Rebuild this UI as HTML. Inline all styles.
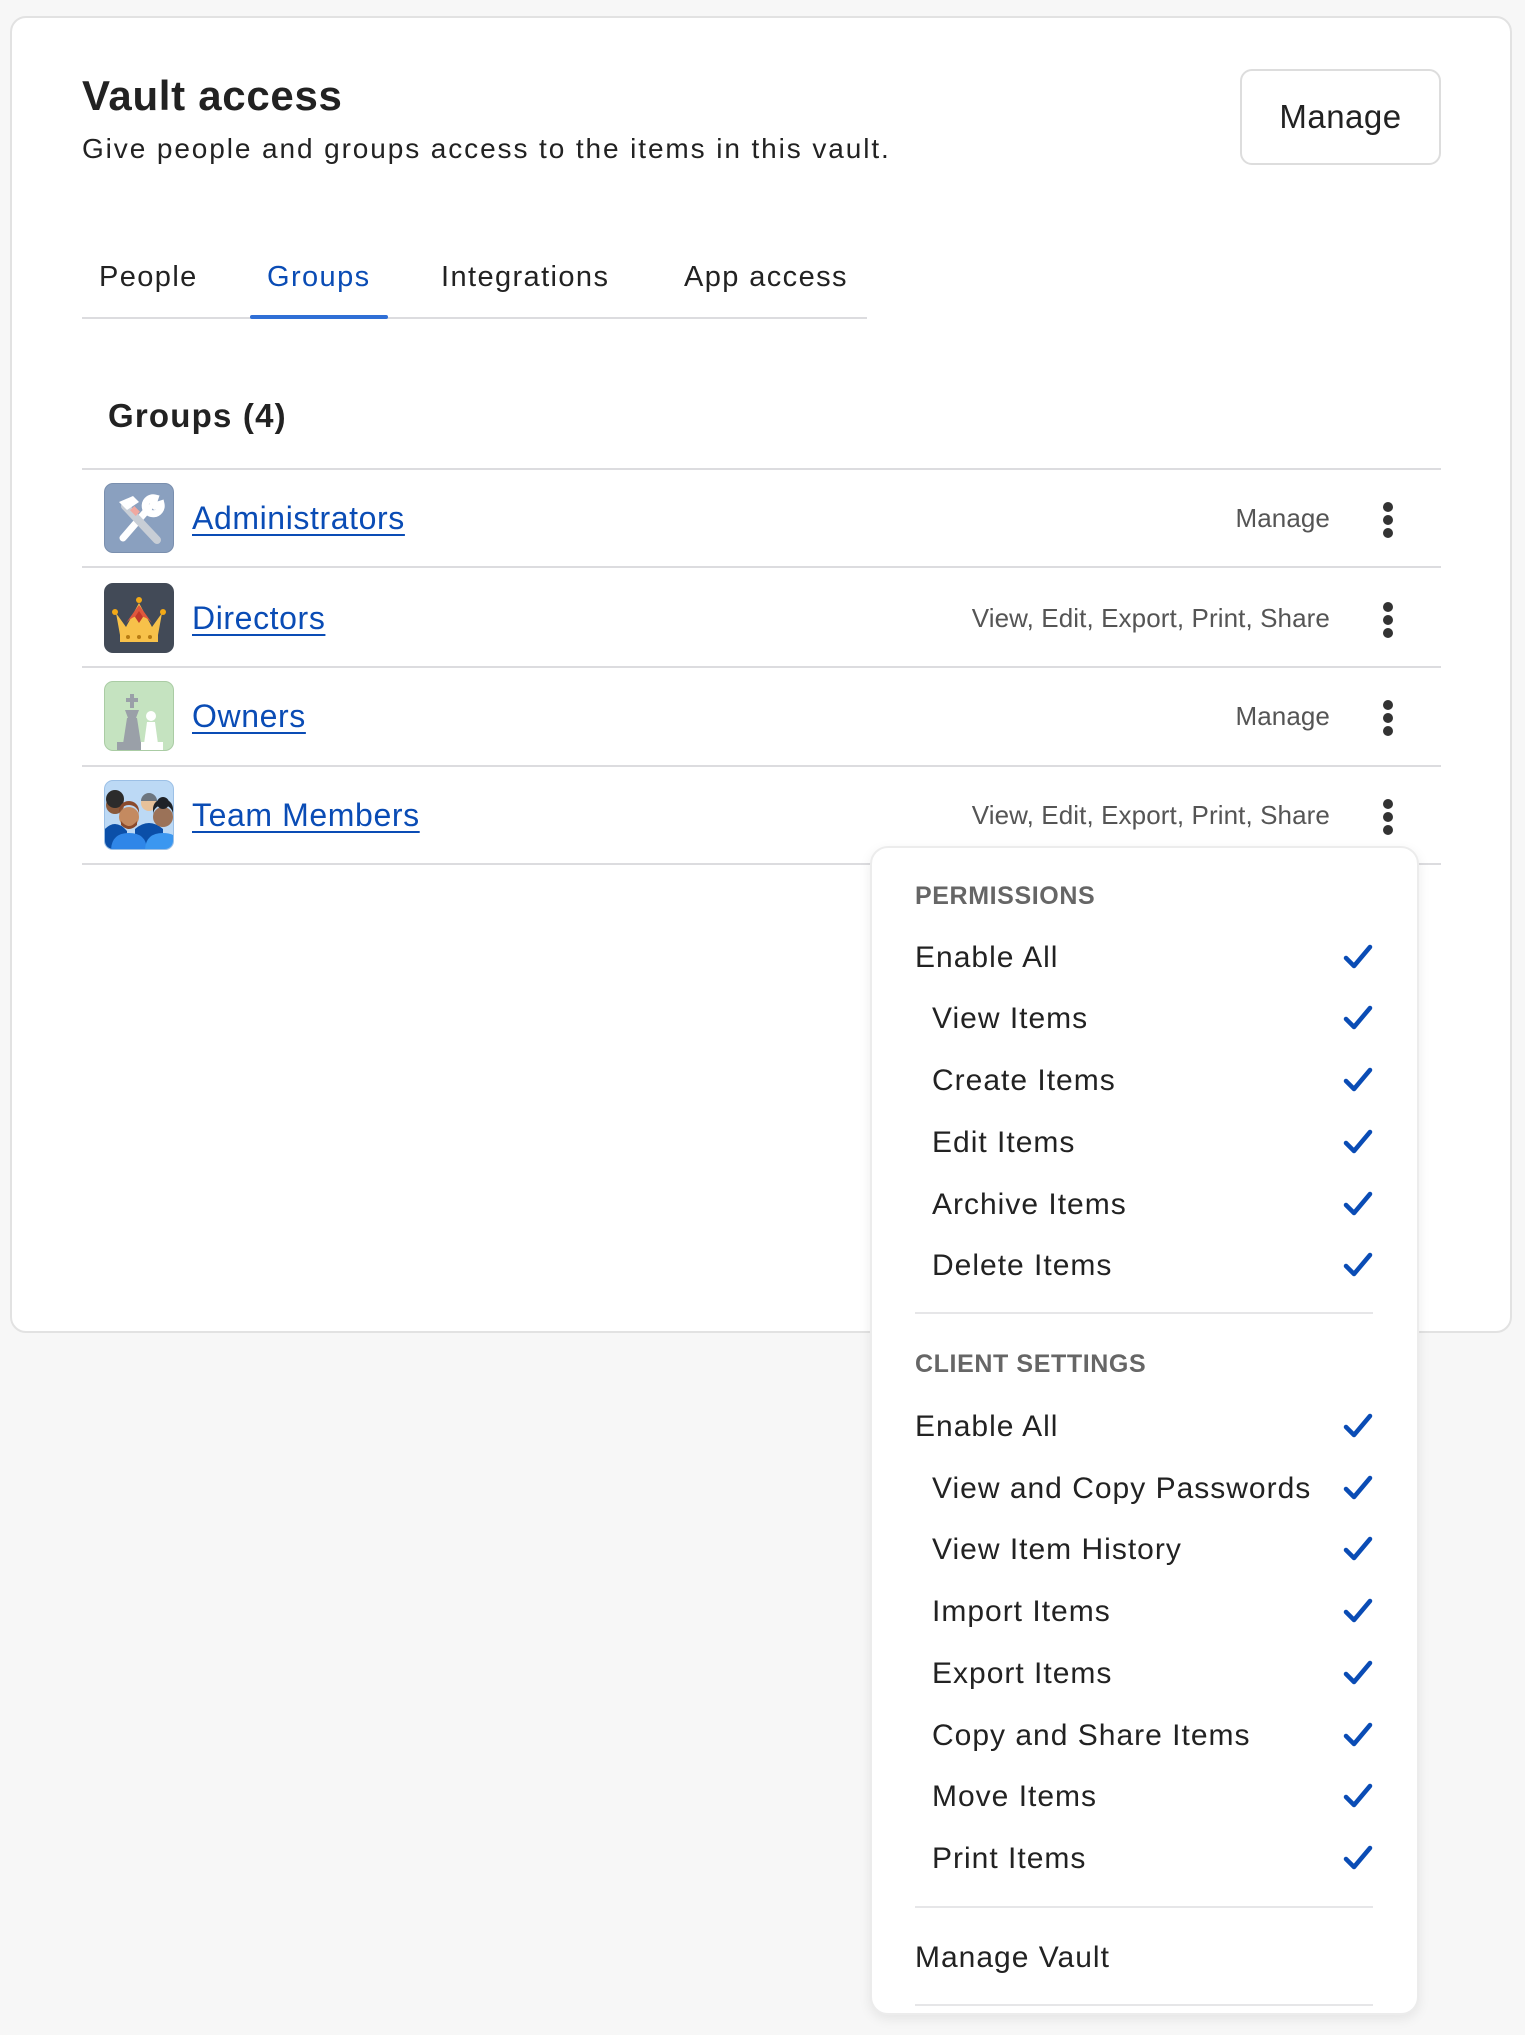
<!DOCTYPE html>
<html><head><meta charset="utf-8"><style>
*{margin:0;padding:0;box-sizing:border-box}
body{width:1525px;height:2035px;background:#f7f7f7;position:relative;overflow:hidden;font-family:"Liberation Sans",sans-serif;color:#222}
.t{position:absolute;line-height:1;white-space:nowrap}
.card{position:absolute;left:10px;top:16px;width:1502px;height:1317px;background:#fff;border:2px solid #e2e2e2;border-radius:16px}
.hl{position:absolute;height:2px;background:#dcdcdf}
.name{color:#0a4cb5;text-decoration:underline;text-decoration-thickness:2px;text-underline-offset:5px;font-size:32px;letter-spacing:.6px}
.perm{color:#555;font-size:26px;letter-spacing:.1px}
.ico{position:absolute;left:104px;width:70px;height:70px;border-radius:9px;overflow:hidden}
.kb{position:absolute;left:1383px;width:10px}
.kb i{display:block;width:10px;height:10px;border-radius:50%;background:#333;margin-bottom:3px}
.dd{position:absolute;left:870px;top:846px;width:549px;height:1169px;background:#fff;border:2px solid #ececec;border-radius:18px;box-shadow:0 4px 12px rgba(0,0,0,.08)}
.hd{font-size:25px;font-weight:bold;color:#666;left:915px;letter-spacing:.6px}
.it{font-size:30px;color:#222;letter-spacing:1px}
.tab{font-size:29px;letter-spacing:1.4px;top:263px}
.ck{position:absolute;left:1343px;width:30px;height:26px}
</style></head><body>
<div class="card"></div>
<div class="t" style="left:82px;top:75px;font-size:42px;font-weight:bold;letter-spacing:.7px">Vault access</div>
<div class="t" style="left:82px;top:135px;font-size:28px;letter-spacing:1.9px">Give people and groups access to the items in this vault.</div>
<div style="position:absolute;left:1240px;top:69px;width:201px;height:96px;border:2px solid #ddd;border-radius:12px;font-size:33px;display:flex;align-items:center;justify-content:center;letter-spacing:.5px">Manage</div>
<div class="t tab" style="left:99px">People</div>
<div class="t tab" style="left:267px;color:#0a4cb5">Groups</div>
<div class="t tab" style="left:441px">Integrations</div>
<div class="t tab" style="left:684px">App access</div>
<div class="hl" style="left:82px;top:317px;width:785px"></div>
<div style="position:absolute;left:250px;top:315px;width:138px;height:4px;background:#2f6fd6;border-radius:2px"></div>
<div class="t" style="left:108px;top:399px;font-size:33px;font-weight:bold;letter-spacing:1.2px">Groups (4)</div>

<div class="hl" style="left:82px;top:468px;width:1359px"></div>
<div class="hl" style="left:82px;top:566px;width:1359px"></div>
<div class="hl" style="left:82px;top:666px;width:1359px"></div>
<div class="hl" style="left:82px;top:765px;width:1359px"></div>
<div class="hl" style="left:82px;top:863px;width:1359px"></div>

<div class="ico" style="top:483px;background:#8aa0bf;border:1px solid #7a8fae"><svg width="70" height="70" viewBox="0 0 70 70"><path d="M18 54 L44 24 M50 14 a8 8 0 1 0 6 6 l-6 2-2-2 2-6z" stroke="#fff" stroke-width="7" fill="none" stroke-linecap="round"/><path d="M20 22 L52 56" stroke="#c8ced6" stroke-width="8" stroke-linecap="round"/><path d="M14 18 l14-6 6 6-12 8z" fill="#fff"/><rect x="26" y="24" width="8" height="6" fill="#f0a8a0" transform="rotate(45 30 27)"/></svg></div>
<div class="t name" style="left:192px;top:502px">Administrators</div>
<div class="t perm" style="right:195px;top:505px">Manage</div>
<div class="kb" style="top:502px"><i></i><i></i><i></i></div>

<div class="ico" style="top:583px;background:#424a57"><svg width="70" height="70" viewBox="0 0 70 70"><path d="M12 30 L22 44 L35 20 L48 44 L58 30 L54 52 H16z" fill="#f7c14a"/><path d="M22 40 Q35 26 48 40 L35 22z" fill="#e0573d"/><path d="M35 28 l4 6-4 6-4-6z" fill="#c0392b"/><rect x="16" y="50" width="38" height="9" fill="#f7c14a"/><circle cx="24" cy="54" r="2" fill="#b77b12"/><circle cx="35" cy="54" r="2" fill="#b77b12"/><circle cx="46" cy="54" r="2" fill="#b77b12"/><circle cx="35" cy="17" r="3" fill="#f3a916"/><circle cx="11" cy="29" r="3" fill="#f3a916"/><circle cx="59" cy="29" r="3" fill="#f3a916"/></svg></div>
<div class="t name" style="left:192px;top:602px">Directors</div>
<div class="t perm" style="right:195px;top:605px">View, Edit, Export, Print, Share</div>
<div class="kb" style="top:602px"><i></i><i></i><i></i></div>

<div class="ico" style="top:681px;background:#c5e3c0;border:1px solid #aacca4"><svg width="70" height="70" viewBox="0 0 70 70"><path d="M20 28 h14 l-3 8 h-8z M25 12h4v4h4v4h-4v6h-4v-6h-4v-4h4z" fill="#9aa0a8"/><path d="M22 36 h10 l4 26 h-18z" fill="#9aa0a8"/><rect x="12" y="60" width="30" height="8" fill="#9aa0a8"/><circle cx="46" cy="34" r="5" fill="#fff"/><path d="M42 40 h8 l3 22 h-14z" fill="#fff"/><rect x="36" y="60" width="22" height="8" fill="#fff"/></svg></div>
<div class="t name" style="left:192px;top:700px">Owners</div>
<div class="t perm" style="right:195px;top:703px">Manage</div>
<div class="kb" style="top:700px"><i></i><i></i><i></i></div>

<div class="ico" style="top:780px;background:#bcd9f5;border:1px solid #9cc0e6"><svg width="70" height="70" viewBox="0 0 70 70"><circle cx="10" cy="24" r="9" fill="#8a5a3c"/><circle cx="10" cy="18" r="9" fill="#2b2b2b"/><circle cx="44" cy="22" r="8" fill="#e7c19a"/><path d="M36 20 a8 8 0 0 1 16 0z" fill="#6d7680"/><path d="M-2 50 q12-14 24 0 v22 h-24z" fill="#0b4fa8"/><path d="M30 48 q14-12 28 0 v22 h-28z" fill="#0b4fa8"/><circle cx="24" cy="36" r="10" fill="#c48a60"/><path d="M14 34 a10 10 0 0 1 20 0 v-4 a10 10 0 0 0 -20 0z" fill="#8a4a2c"/><path d="M16 40 q8 10 16 0 v4 q-8 8 -16 0z" fill="#8a4a2c"/><circle cx="58" cy="36" r="10" fill="#9b7258"/><path d="M48 34 a10 10 0 0 1 20 0 v-6 a10 10 0 0 0 -20 0z" fill="#1e2228"/><circle cx="58" cy="22" r="6" fill="#1e2228"/><path d="M6 70 q0-18 18-18 q18 0 18 18z" fill="#2f86e8"/><path d="M40 70 q0-18 18-18 q18 0 18 18z" fill="#3b97f0"/></svg></div>
<div class="t name" style="left:192px;top:799px">Team Members</div>
<div class="t perm" style="right:195px;top:802px">View, Edit, Export, Print, Share</div>
<div class="kb" style="top:799px"><i></i><i></i><i></i></div>

<div class="dd"></div>
<div class="t hd" style="top:884px">PERMISSIONS</div>
<div class="t it" style="left:915px;top:943px">Enable All</div>
<div class="t it" style="left:932px;top:1004px">View Items</div>
<div class="t it" style="left:932px;top:1066px">Create Items</div>
<div class="t it" style="left:932px;top:1128px">Edit Items</div>
<div class="t it" style="left:932px;top:1190px">Archive Items</div>
<div class="t it" style="left:932px;top:1251px">Delete Items</div>
<div class="hl" style="left:915px;top:1312px;width:458px;background:#e6e6e8"></div>
<div class="t hd" style="top:1352px">CLIENT SETTINGS</div>
<div class="t it" style="left:915px;top:1412px">Enable All</div>
<div class="t it" style="left:932px;top:1474px">View and Copy Passwords</div>
<div class="t it" style="left:932px;top:1535px">View Item History</div>
<div class="t it" style="left:932px;top:1597px">Import Items</div>
<div class="t it" style="left:932px;top:1659px">Export Items</div>
<div class="t it" style="left:932px;top:1721px">Copy and Share Items</div>
<div class="t it" style="left:932px;top:1782px">Move Items</div>
<div class="t it" style="left:932px;top:1844px">Print Items</div>
<div class="hl" style="left:915px;top:1906px;width:458px;background:#e6e6e8"></div>
<div class="t it" style="left:915px;top:1943px">Manage Vault</div>
<div class="hl" style="left:915px;top:2004px;width:458px;background:#e6e6e8"></div>

<svg width="0" height="0" style="position:absolute"><defs><path id="c" d="M3 14 L11 22 L27 3" stroke="#0a4cb5" stroke-width="4.5" fill="none" stroke-linecap="round" stroke-linejoin="round"/></defs></svg>
<svg class="ck" style="top:944px"><use href="#c"/></svg>
<svg class="ck" style="top:1005px"><use href="#c"/></svg>
<svg class="ck" style="top:1067px"><use href="#c"/></svg>
<svg class="ck" style="top:1129px"><use href="#c"/></svg>
<svg class="ck" style="top:1191px"><use href="#c"/></svg>
<svg class="ck" style="top:1252px"><use href="#c"/></svg>
<svg class="ck" style="top:1413px"><use href="#c"/></svg>
<svg class="ck" style="top:1475px"><use href="#c"/></svg>
<svg class="ck" style="top:1536px"><use href="#c"/></svg>
<svg class="ck" style="top:1598px"><use href="#c"/></svg>
<svg class="ck" style="top:1660px"><use href="#c"/></svg>
<svg class="ck" style="top:1722px"><use href="#c"/></svg>
<svg class="ck" style="top:1783px"><use href="#c"/></svg>
<svg class="ck" style="top:1845px"><use href="#c"/></svg>
</body></html>
